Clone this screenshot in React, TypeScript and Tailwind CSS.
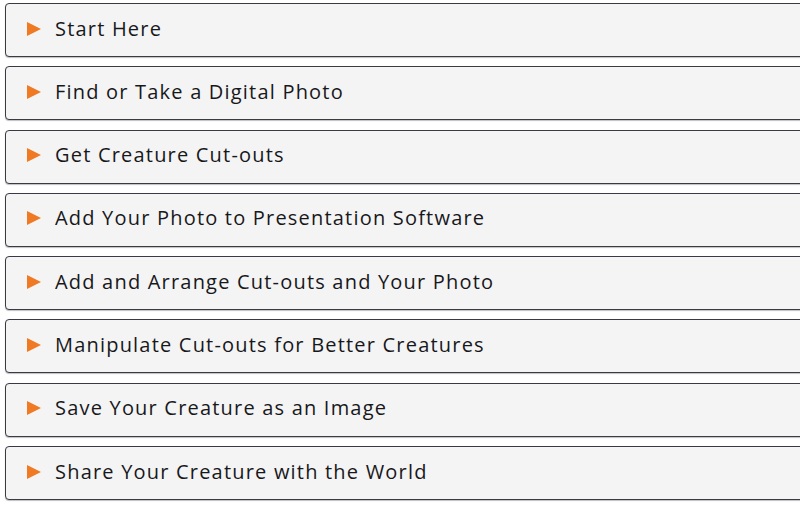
const items = [
  'Start Here',
  'Find or Take a Digital Photo',
  'Get Creature Cut-outs',
  'Add Your Photo to Presentation Software',
  'Add and Arrange Cut-outs and Your Photo',
  'Manipulate Cut-outs for Better Creatures',
  'Save Your Creature as an Image',
  'Share Your Creature with the World',
];

export default function App() {
  return (
    <div className="min-h-screen bg-white pt-[3px] pl-[5px] overflow-hidden" style={{ fontFamily: '"Open Sans", "Noto Sans", sans-serif' }}>
      <div className="w-[820px] flex flex-col gap-[9.3px]">
        {items.map((label) => (
          <button
            key={label}
            className="h-[54px] pb-[3px] flex items-center rounded-[4px] border border-[#3a3a44] bg-[#f4f4f5] text-left shadow-[0_1px_1px_rgba(0,0,0,0.25)]"
          >
            <span className="ml-[21px] w-0 h-0 border-y-[7.5px] border-y-transparent border-l-[14px] border-l-[#f07a24]" />
            <span className="ml-[14px] text-[20px] font-normal tracking-[1.2px] text-[#18181b]">{label}</span>
          </button>
        ))}
      </div>
    </div>
  );
}
